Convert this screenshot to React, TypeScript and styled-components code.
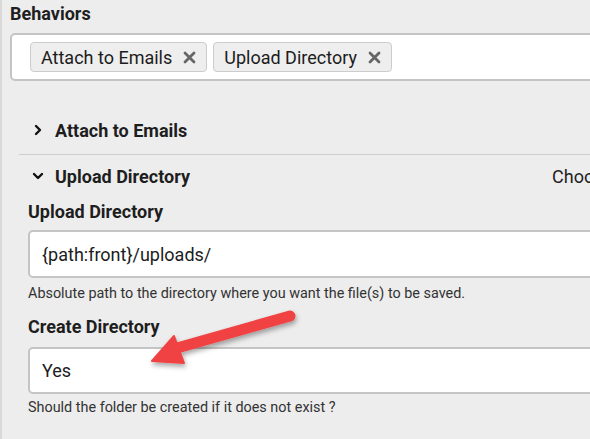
import React from 'react';
import styled, { createGlobalStyle } from 'styled-components';

const GlobalStyle = createGlobalStyle`
  html, body {
    margin: 0;
    padding: 0;
    background: #ededed;
    overflow: hidden;
  }
  body {
    font-family: Roboto, "Liberation Sans", Arial, sans-serif;
    color: #222;
  }
`;

const Panel = styled.div`
  position: relative;
  width: 900px;
  height: 439px;
  box-sizing: border-box;
  padding: 4px 0 0 8px;
  border-left: 2px solid #d9d9d9;
`;

const FieldLabel = styled.div<{ gap?: number }>`
  font-size: 18px;
  font-weight: 700;
  line-height: 20px;
  color: #1e1e1e;
  margin-top: ${({ gap }) => gap ?? 0}px;
`;

const TagBox = styled.div`
  margin-top: 9px;
  height: 48px;
  box-sizing: border-box;
  border: 2px solid #c4c4c4;
  border-radius: 5px;
  background: #fff;
  display: flex;
  align-items: center;
  gap: 6px;
  padding: 0 18px;
`;

const Tag = styled.div`
  height: 30px;
  box-sizing: border-box;
  display: flex;
  align-items: center;
  gap: 11px;
  padding: 0 10px 0 10px;
  background: #eeeeee;
  border: 1px solid #cccccc;
  border-radius: 4px;
  font-size: 18px;
  color: #1c1c1c;
`;

const Remove = styled.span`
  display: flex;
  align-items: center;
  color: #666;
`;

const Accordion = styled.div`
  margin: 25px 0 0 9px;
`;

const Item = styled.div<{ divider?: boolean }>`
  border-bottom: ${({ divider }) => (divider ? '1px solid #cdcdcd' : 'none')};
`;

const Header = styled.div<{ h: number }>`
  height: ${({ h }) => h}px;
  display: grid;
  grid-template-columns: 521px auto;
  align-items: center;
  padding-left: 12px;
`;

const HeaderTitle = styled.div`
  display: flex;
  align-items: center;
  gap: 10px;
  font-size: 18px;
  font-weight: 700;
  color: #1e1e1e;
`;

const Chevron = styled.span`
  width: 14px;
  display: flex;
  justify-content: center;
  color: #111;
`;

const HeaderAside = styled.div`
  font-size: 18px;
  color: #222;
  white-space: nowrap;
`;

const Body = styled.div`
  padding: 5px 0 0 9px;
`;

const TextBox = styled.div<{ gap: number; h: number }>`
  margin-top: ${({ gap }) => gap}px;
  height: ${({ h }) => h}px;
  box-sizing: border-box;
  border: 2px solid #c4c4c4;
  border-radius: 5px;
  background: #fff;
  display: flex;
  align-items: center;
  padding-left: 12px;
  font-size: 18px;
  color: #1c1c1c;
`;

const Help = styled.div<{ gap: number }>`
  margin-top: ${({ gap }) => gap}px;
  font-size: 14.4px;
  line-height: 17px;
  color: #333;
`;

const Arrow = styled.svg`
  position: absolute;
  left: 0;
  top: 0;
  pointer-events: none;
`;

const Cross = () => (
  <svg width="13" height="13" viewBox="0 0 13 13">
    <path d="M2 2L11 11M11 2L2 11" stroke="currentColor" strokeWidth="2.8" strokeLinecap="round" />
  </svg>
);

const ChevronRight = () => (
  <svg width="8" height="12" viewBox="0 0 8 12">
    <path d="M2 2L6 6L2 10" fill="none" stroke="currentColor" strokeWidth="2.4" strokeLinecap="round" strokeLinejoin="round" />
  </svg>
);

const ChevronDown = () => (
  <svg width="12" height="8" viewBox="0 0 12 8">
    <path d="M2 2L6 6L10 2" fill="none" stroke="currentColor" strokeWidth="2.4" strokeLinecap="round" strokeLinejoin="round" />
  </svg>
);

export default function App() {
  return (
    <>
      <GlobalStyle />
      <Panel>
        <FieldLabel>Behaviors</FieldLabel>
        <TagBox>
          <Tag>
            Attach to Emails
            <Remove><Cross /></Remove>
          </Tag>
          <Tag>
            Upload Directory
            <Remove><Cross /></Remove>
          </Tag>
        </TagBox>

        <Accordion>
          <Item divider>
            <Header h={48}>
              <HeaderTitle>
                <Chevron><ChevronRight /></Chevron>
                Attach to Emails
              </HeaderTitle>
            </Header>
          </Item>
          <Item>
            <Header h={42}>
              <HeaderTitle>
                <Chevron><ChevronDown /></Chevron>
                Upload Directory
              </HeaderTitle>
              <HeaderAside>Choose the directory</HeaderAside>
            </Header>
            <Body>
              <FieldLabel>Upload Directory</FieldLabel>
              <TextBox gap={8} h={48}>{'{path:front}/uploads/'}</TextBox>
              <Help gap={7}>Absolute path to the directory where you want the file(s) to be saved.</Help>
              <FieldLabel gap={15}>Create Directory</FieldLabel>
              <TextBox gap={10} h={47}>Yes</TextBox>
              <Help gap={5}>Should the folder be created if it does not exist ?</Help>
            </Body>
          </Item>
        </Accordion>

        <Arrow width="590" height="439" viewBox="0 0 590 439">
          <defs>
            <filter id="shadow" x="-20%" y="-20%" width="140%" height="140%">
              <feDropShadow dx="1" dy="3" stdDeviation="2.5" floodColor="#000" floodOpacity="0.35" />
            </filter>
          </defs>
          <g filter="url(#shadow)" fill="#f04343" stroke="#f04343">
            <line x1="288" y1="316" x2="168" y2="350" strokeWidth="11" strokeLinecap="round" />
            <path d="M150 361 L172 336 L182 363 Z" strokeWidth="2" strokeLinejoin="round" />
          </g>
        </Arrow>
      </Panel>
    </>
  );
}
